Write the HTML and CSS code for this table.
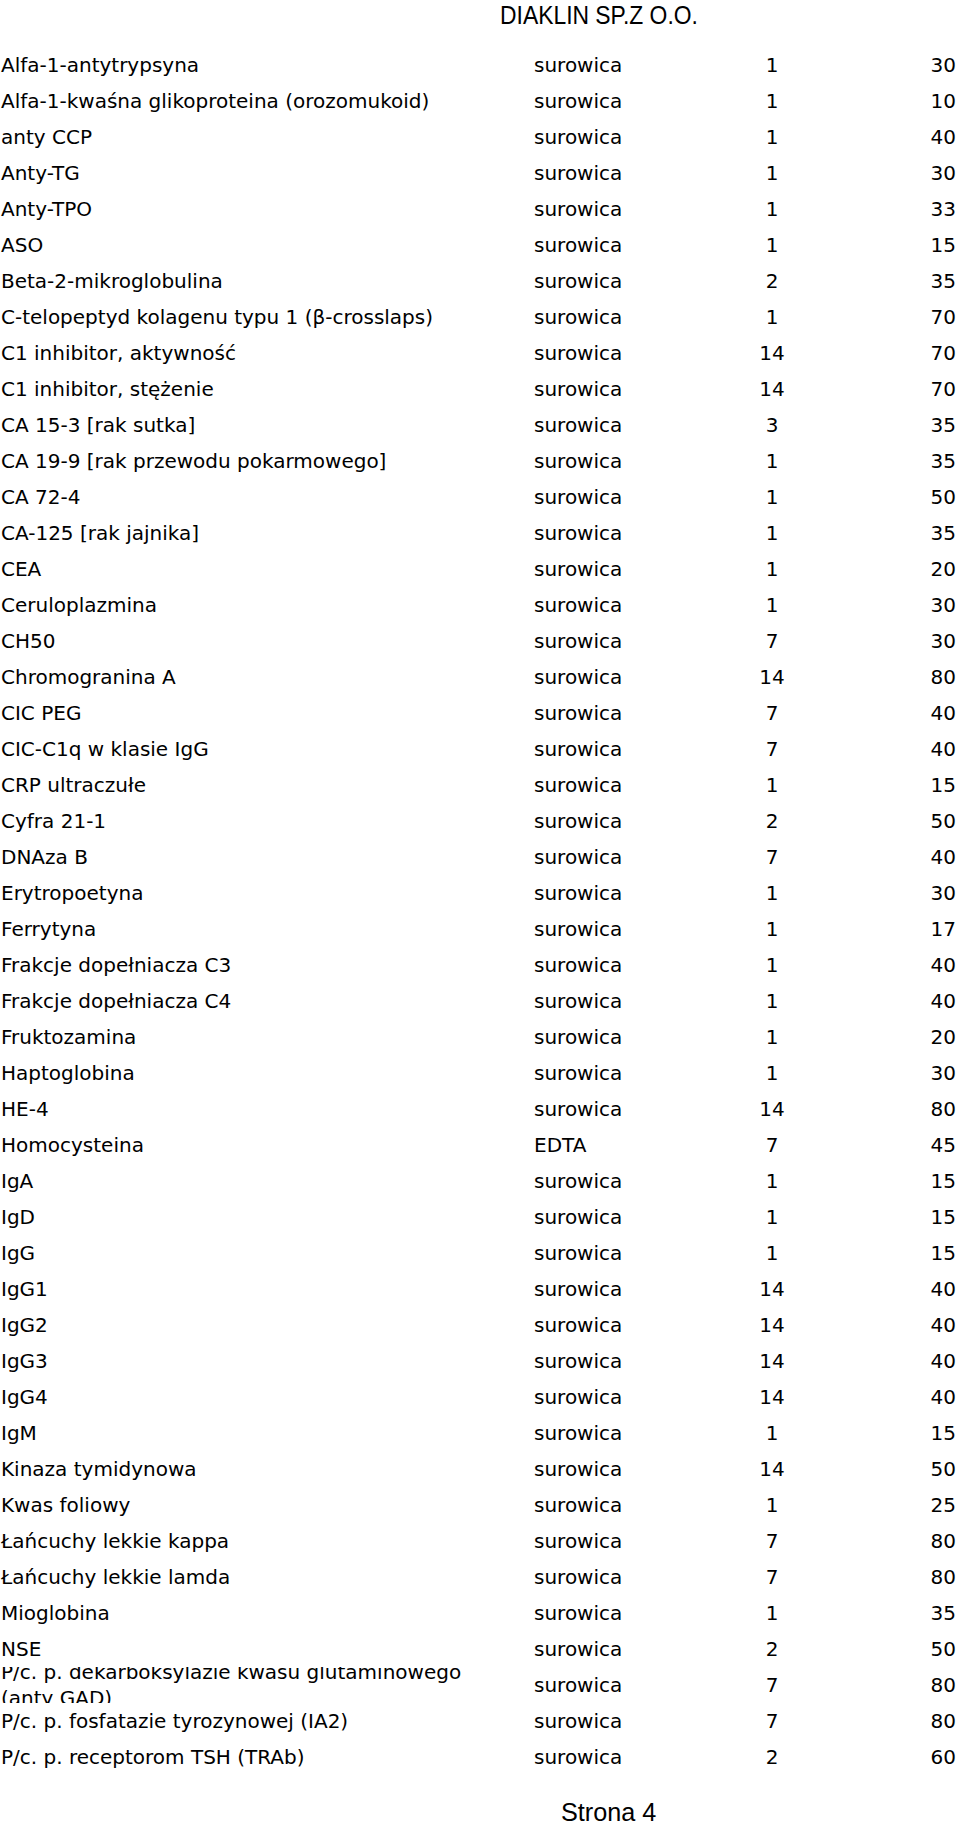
FILE: index.html
```html
<!DOCTYPE html>
<html lang="pl">
<head>
<meta charset="utf-8">
<title>DIAKLIN SP.Z O.O. – Strona 4</title>
<link rel="stylesheet" href="styles.css">
</head>
<body>
<div class="page">
  <header class="company"><span class="narrow">DIAKLIN SP.Z O.O.</span></header>
  <div class="tests">
    <div class="row"><span class="name">Alfa-1-antytrypsyna</span><span class="sample">surowica</span><span class="days">1</span><span class="price">30</span></div>
    <div class="row"><span class="name">Alfa-1-kwaśna glikoproteina (orozomukoid)</span><span class="sample">surowica</span><span class="days">1</span><span class="price">10</span></div>
    <div class="row"><span class="name">anty CCP</span><span class="sample">surowica</span><span class="days">1</span><span class="price">40</span></div>
    <div class="row"><span class="name">Anty-TG</span><span class="sample">surowica</span><span class="days">1</span><span class="price">30</span></div>
    <div class="row"><span class="name">Anty-TPO</span><span class="sample">surowica</span><span class="days">1</span><span class="price">33</span></div>
    <div class="row"><span class="name">ASO</span><span class="sample">surowica</span><span class="days">1</span><span class="price">15</span></div>
    <div class="row"><span class="name">Beta-2-mikroglobulina</span><span class="sample">surowica</span><span class="days">2</span><span class="price">35</span></div>
    <div class="row"><span class="name">C-telopeptyd kolagenu typu 1 (β-crosslaps)</span><span class="sample">surowica</span><span class="days">1</span><span class="price">70</span></div>
    <div class="row"><span class="name">C1 inhibitor, aktywność</span><span class="sample">surowica</span><span class="days">14</span><span class="price">70</span></div>
    <div class="row"><span class="name">C1 inhibitor, stężenie</span><span class="sample">surowica</span><span class="days">14</span><span class="price">70</span></div>
    <div class="row"><span class="name">CA 15-3 [rak sutka]</span><span class="sample">surowica</span><span class="days">3</span><span class="price">35</span></div>
    <div class="row"><span class="name">CA 19-9 [rak przewodu pokarmowego]</span><span class="sample">surowica</span><span class="days">1</span><span class="price">35</span></div>
    <div class="row"><span class="name">CA 72-4</span><span class="sample">surowica</span><span class="days">1</span><span class="price">50</span></div>
    <div class="row"><span class="name">CA-125 [rak jajnika]</span><span class="sample">surowica</span><span class="days">1</span><span class="price">35</span></div>
    <div class="row"><span class="name">CEA</span><span class="sample">surowica</span><span class="days">1</span><span class="price">20</span></div>
    <div class="row"><span class="name">Ceruloplazmina</span><span class="sample">surowica</span><span class="days">1</span><span class="price">30</span></div>
    <div class="row"><span class="name">CH50</span><span class="sample">surowica</span><span class="days">7</span><span class="price">30</span></div>
    <div class="row"><span class="name">Chromogranina A</span><span class="sample">surowica</span><span class="days">14</span><span class="price">80</span></div>
    <div class="row"><span class="name">CIC PEG</span><span class="sample">surowica</span><span class="days">7</span><span class="price">40</span></div>
    <div class="row"><span class="name">CIC-C1q w klasie IgG</span><span class="sample">surowica</span><span class="days">7</span><span class="price">40</span></div>
    <div class="row"><span class="name">CRP ultraczułe</span><span class="sample">surowica</span><span class="days">1</span><span class="price">15</span></div>
    <div class="row"><span class="name">Cyfra 21-1</span><span class="sample">surowica</span><span class="days">2</span><span class="price">50</span></div>
    <div class="row"><span class="name">DNAza B</span><span class="sample">surowica</span><span class="days">7</span><span class="price">40</span></div>
    <div class="row"><span class="name">Erytropoetyna</span><span class="sample">surowica</span><span class="days">1</span><span class="price">30</span></div>
    <div class="row"><span class="name">Ferrytyna</span><span class="sample">surowica</span><span class="days">1</span><span class="price">17</span></div>
    <div class="row"><span class="name">Frakcje dopełniacza C3</span><span class="sample">surowica</span><span class="days">1</span><span class="price">40</span></div>
    <div class="row"><span class="name">Frakcje dopełniacza C4</span><span class="sample">surowica</span><span class="days">1</span><span class="price">40</span></div>
    <div class="row"><span class="name">Fruktozamina</span><span class="sample">surowica</span><span class="days">1</span><span class="price">20</span></div>
    <div class="row"><span class="name">Haptoglobina</span><span class="sample">surowica</span><span class="days">1</span><span class="price">30</span></div>
    <div class="row"><span class="name">HE-4</span><span class="sample">surowica</span><span class="days">14</span><span class="price">80</span></div>
    <div class="row"><span class="name">Homocysteina</span><span class="sample">EDTA</span><span class="days">7</span><span class="price">45</span></div>
    <div class="row"><span class="name">IgA</span><span class="sample">surowica</span><span class="days">1</span><span class="price">15</span></div>
    <div class="row"><span class="name">IgD</span><span class="sample">surowica</span><span class="days">1</span><span class="price">15</span></div>
    <div class="row"><span class="name">IgG</span><span class="sample">surowica</span><span class="days">1</span><span class="price">15</span></div>
    <div class="row"><span class="name">IgG1</span><span class="sample">surowica</span><span class="days">14</span><span class="price">40</span></div>
    <div class="row"><span class="name">IgG2</span><span class="sample">surowica</span><span class="days">14</span><span class="price">40</span></div>
    <div class="row"><span class="name">IgG3</span><span class="sample">surowica</span><span class="days">14</span><span class="price">40</span></div>
    <div class="row"><span class="name">IgG4</span><span class="sample">surowica</span><span class="days">14</span><span class="price">40</span></div>
    <div class="row"><span class="name">IgM</span><span class="sample">surowica</span><span class="days">1</span><span class="price">15</span></div>
    <div class="row"><span class="name">Kinaza tymidynowa</span><span class="sample">surowica</span><span class="days">14</span><span class="price">50</span></div>
    <div class="row"><span class="name">Kwas foliowy</span><span class="sample">surowica</span><span class="days">1</span><span class="price">25</span></div>
    <div class="row"><span class="name">Łańcuchy lekkie kappa</span><span class="sample">surowica</span><span class="days">7</span><span class="price">80</span></div>
    <div class="row"><span class="name">Łańcuchy lekkie lamda</span><span class="sample">surowica</span><span class="days">7</span><span class="price">80</span></div>
    <div class="row"><span class="name">Mioglobina</span><span class="sample">surowica</span><span class="days">1</span><span class="price">35</span></div>
    <div class="row"><span class="name">NSE</span><span class="sample">surowica</span><span class="days">2</span><span class="price">50</span></div>
    <div class="row"><span class="name name-wrap"><span class="wrap-text">P/c. p. dekarboksylazie kwasu glutaminowego (anty GAD)</span></span><span class="sample">surowica</span><span class="days">7</span><span class="price">80</span></div>
    <div class="row"><span class="name">P/c. p. fosfatazie tyrozynowej (IA2)</span><span class="sample">surowica</span><span class="days">7</span><span class="price">80</span></div>
    <div class="row"><span class="name">P/c. p. receptorom TSH (TRAb)</span><span class="sample">surowica</span><span class="days">2</span><span class="price">60</span></div>
  </div>
  <footer class="page-number"><span class="narrow narrow-light">Strona 4</span></footer>
</div>
</body>
</html>
```

FILE: styles.css
```css
html, body {
  margin: 0;
  padding: 0;
  background: #ffffff;
}

.page {
  width: 960px;
  height: 1832px;
  color: #000000;
  font-family: "DejaVu Sans", Verdana, sans-serif;
  overflow: hidden;
}

.company {
  height: 47px;
  padding-left: 500px;
  box-sizing: border-box;
  font-family: "Liberation Sans", Arial, sans-serif;
  font-size: 26px;
  line-height: 30px;
}

.narrow {
  display: inline-block;
  transform: scaleX(0.88);
  transform-origin: left center;
  white-space: nowrap;
}

.narrow-light {
  transform: scaleX(0.97);
}

.tests {
  display: flex;
  flex-direction: column;
}

.row {
  display: grid;
  grid-template-columns: 533px 200px 76px 146px;
  height: 36px;
  align-items: center;
  font-size: 20px;
  line-height: 36px;
  padding-left: 1px;
}

.name {
  white-space: nowrap;
}

.name-wrap {
  white-space: normal;
  height: 36px;
  overflow: hidden;
  display: flex;
  align-items: center;
  width: 490px;
}

.wrap-text {
  line-height: 26px;
}

.days {
  text-align: center;
}

.price {
  text-align: right;
}

.page-number {
  margin-top: 22px;
  padding-left: 561px;
  font-family: "Liberation Sans", Arial, sans-serif;
  font-size: 26px;
  line-height: 30px;
}
```
